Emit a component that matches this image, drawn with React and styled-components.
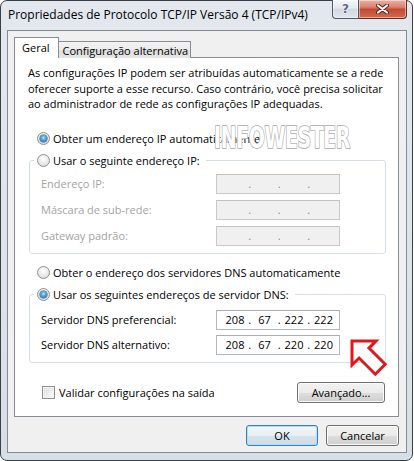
import React from "react";
import styled, { createGlobalStyle } from "styled-components";

const GlobalStyle = createGlobalStyle`
	html, body {
		margin: 0;
		padding: 0;
		background: #ffffff;
	}
	body {
		font-family: "Open Sans", "Noto Sans", sans-serif;
		font-size: 11px;
		color: #000;
	}
`;

const Window = styled.div`
	position: relative;
	box-sizing: border-box;
	width: 413px;
	height: 461px;
	display: flex;
	flex-direction: column;
	padding: 0 5px 7px 6px;
	border: 1px solid #3b3f45;
	border-radius: 7px;
	background: linear-gradient(to bottom, #e2e8ee 0%, #dde4ea 50%, #d8dee5 100%);
`;

const TitleBar = styled.div`
	height: 29px;
	display: flex;
	justify-content: space-between;
	align-items: flex-start;
`;

const Title = styled.div`
	padding: 6px 0 0 1px;
	font-size: 12px;
	line-height: 16px;
	color: #000;
`;

const Captions = styled.div`
	display: flex;
	margin-top: -1px;
`;

const CaptionButton = styled.div`
	box-sizing: border-box;
	width: ${(p) => p.$w}px;
	height: 19px;
	display: flex;
	align-items: center;
	justify-content: center;
	border: 1px solid ${(p) => (p.$close ? "#6b2a20" : "#4f5763")};
	border-top: none;
	border-left: ${(p) => (p.$close ? "none" : "1px solid #4f5763")};
	border-radius: ${(p) => (p.$close ? "0 0 4px 0" : "0 0 0 4px")};
	background: ${(p) =>
		p.$close
			? "linear-gradient(to bottom, #eab1a4 0%, #d98170 40%, #c44a32 52%, #cf6a4f 100%)"
			: "linear-gradient(to bottom, #f4f6f9 0%, #e4e9ef 45%, #d2d9e2 52%, #dfe5ec 100%)"};
	box-shadow: inset 0 0 0 1px rgba(255, 255, 255, 0.45);
`;

const HelpGlyph = styled.span`
	font-family: "DejaVu Sans", sans-serif;
	font-weight: bold;
	font-size: 12px;
	color: #5d6a7c;
	text-shadow: 0 0 2px #fff, 0 0 1px #fff;
`;

const Client = styled.div`
	flex: 1;
	display: flex;
	flex-direction: column;
	padding: 6px 7px 0 6px;
	border: 1px solid #858b93;
	background: #f0f0f0;
`;

const Tabs = styled.div`
	position: relative;
	z-index: 1;
	display: flex;
	align-items: flex-end;
	height: 21px;
	margin-bottom: -1px;
`;

const Tab = styled.div`
	box-sizing: border-box;
	height: ${(p) => (p.$active ? 21 : 17)}px;
	display: flex;
	align-items: center;
	padding: ${(p) => (p.$active ? "0 8px 2px 7px" : "0 2px 0 4px")};
	border: 1px solid #898c95;
	border-bottom: none;
	border-left: ${(p) => (p.$active ? "1px solid #898c95" : "none")};
	background: ${(p) =>
		p.$active ? "#ffffff" : "linear-gradient(to bottom, #f3f3f3 0%, #ebebeb 50%, #dedede 51%, #e6e6e6 100%)"};
`;

const Panel = styled.div`
	position: relative;
	display: flex;
	flex-direction: column;
	padding: 7px 0 13px;
	border: 1px solid #898c95;
	background: #ffffff;
`;

const Intro = styled.p`
	margin: 0;
	padding: 0 13px;
	line-height: 15.5px;
`;

const OptionRow = styled.label`
	display: flex;
	align-items: center;
	gap: 3px;
	height: 16px;
	margin-top: ${(p) => p.$top || 0}px;
	padding-left: 22px;
`;

const Radio = styled.span`
	position: relative;
	flex: none;
	box-sizing: border-box;
	width: 13px;
	height: 13px;
	border-radius: 50%;
	border: 1px solid #8e9094;
	background: radial-gradient(circle at 50% 35%, #ffffff 0%, #eeeeee 45%, #cfd1d4 100%);

	&::after {
		content: "";
		display: ${(p) => (p.$checked ? "block" : "none")};
		position: absolute;
		inset: 2px;
		border-radius: 50%;
		background: radial-gradient(circle at 50% 40%, #c5ecfc 0%, #4aa7da 40%, #1d5b8e 100%);
		box-shadow: 0 0 0 0.5px #244f77;
	}
`;

const Group = styled.fieldset`
	min-width: 0;
	margin: 6px 12px 0 14px;
	padding: ${(p) => p.$top}px 45px 7px 11px;
	border: 1px solid #d5dfe5;
	border-radius: 3px;
	display: flex;
	flex-direction: column;
	gap: ${(p) => p.$gap}px;
`;

const Legend = styled.legend`
	display: flex;
	align-items: center;
	gap: 3px;
	height: 16px;
	margin-left: -7px;
	padding: 0 6px 0 3px;
`;

const FieldRow = styled.div`
	display: flex;
	justify-content: space-between;
	align-items: center;
	height: 20px;
	color: ${(p) => (p.$disabled ? "#a3a3a3" : "#000")};
`;

const IpBox = styled.div`
	box-sizing: border-box;
	width: 124px;
	height: 20px;
	display: flex;
	align-items: center;
	padding-left: 7px;
	border: 1px solid ${(p) => (p.$disabled ? "#c9c9c9" : "#b4b7bd")};
	border-top-color: ${(p) => (p.$disabled ? "#c2c2c2" : "#abadb3")};
	background: ${(p) => (p.$disabled ? "#f0f0f0" : "#ffffff")};
	color: ${(p) => (p.$disabled ? "#8a8a8a" : "#000")};
`;

const Octet = styled.span`
	width: 22px;
	text-align: center;
`;

const Dot = styled.span`
	width: 7.5px;
	text-align: center;
`;

const PanelFooter = styled.div`
	display: flex;
	justify-content: space-between;
	align-items: center;
	margin: 19px 13px 0 27px;
`;

const CheckLabel = styled.label`
	display: flex;
	align-items: center;
	gap: 4px;
`;

const Checkbox = styled.span`
	box-sizing: border-box;
	width: 13px;
	height: 13px;
	border: 1px solid #8e8f8f;
	background: linear-gradient(135deg, #dcdcdc 0%, #f0f0f0 60%, #fafafa 100%);
	box-shadow: inset 0 0 0 1px #f4f4f4;
`;

const Button = styled.button`
	box-sizing: border-box;
	width: ${(p) => p.$w}px;
	height: 21px;
	padding: 0;
	font: inherit;
	color: #000;
	border: 1px solid ${(p) => (p.$primary ? "#3c7fb1" : "#707070")};
	border-radius: 3px;
	background: ${(p) =>
		p.$primary
			? "linear-gradient(to bottom, #f1f6fa 0%, #e7eff5 50%, #d6e4ef 51%, #cbdcea 100%)"
			: "linear-gradient(to bottom, #f2f2f2 0%, #ebebeb 50%, #dddddd 51%, #cfcfcf 100%)"};
	box-shadow: inset 0 0 0 1px ${(p) => (p.$primary ? "#b5dcf3" : "#fbfbfb")};
`;

const DialogButtons = styled.div`
	display: flex;
	justify-content: flex-end;
	gap: 8px;
	margin-top: 8px;
`;

const Watermark = styled.div`
	position: absolute;
	left: 213px;
	top: 121px;
	font-family: "DejaVu Sans Condensed", "DejaVu Sans", sans-serif;
	font-weight: bold;
	font-size: 30px;
	line-height: 32px;
	letter-spacing: -0.5px;
	color: #ffffff;
	-webkit-text-stroke: 1.6px #a9a9a9;
	paint-order: stroke fill;
	transform: scaleX(0.7);
	transform-origin: left top;
	pointer-events: none;
`;

const Arrow = styled.svg`
	position: absolute;
	left: 344px;
	top: 333px;
	pointer-events: none;
`;

const IpField = ({ value, disabled }) => {
	const parts = value || ["", "", "", ""];
	return (
		<IpBox $disabled={disabled}>
			<Octet>{parts[0]}</Octet>
			<Dot>.</Dot>
			<Octet>{parts[1]}</Octet>
			<Dot>.</Dot>
			<Octet>{parts[2]}</Octet>
			<Dot>.</Dot>
			<Octet>{parts[3]}</Octet>
		</IpBox>
	);
};

const App = () => {
	return (
		<>
			<GlobalStyle />
			<Window>
				<TitleBar>
					<Title>Propriedades de Protocolo TCP/IP Versão 4 (TCP/IPv4)</Title>
					<Captions>
						<CaptionButton $w={27}>
							<HelpGlyph>?</HelpGlyph>
						</CaptionButton>
						<CaptionButton $w={48} $close>
							<svg width="13" height="10" viewBox="0 0 13 10">
								<path d="M2 1.5 L11 8.5 M11 1.5 L2 8.5" stroke="#5b2219" strokeWidth="4" strokeLinecap="round" />
								<path d="M2 1.5 L11 8.5 M11 1.5 L2 8.5" stroke="#ffffff" strokeWidth="2.2" strokeLinecap="round" />
							</svg>
						</CaptionButton>
					</Captions>
				</TitleBar>
				<Client>
					<Tabs>
						<Tab $active>Geral</Tab>
						<Tab>Configuração alternativa</Tab>
					</Tabs>
					<Panel>
						<Intro>
							As configurações IP podem ser atribuídas automaticamente se a rede
							<br />
							oferecer suporte a esse recurso. Caso contrário, você precisa solicitar
							<br />
							ao administrador de rede as configurações IP adequadas.
						</Intro>
						<OptionRow $top={19}>
							<Radio $checked />
							Obter um endereço IP automaticamente
						</OptionRow>
						<Group $top={5} $gap={6}>
							<Legend>
								<Radio />
								Usar o seguinte endereço IP:
							</Legend>
							<FieldRow $disabled>
								Endereço IP:
								<IpField disabled />
							</FieldRow>
							<FieldRow $disabled>
								Máscara de sub-rede:
								<IpField disabled />
							</FieldRow>
							<FieldRow $disabled>
								Gateway padrão:
								<IpField disabled />
							</FieldRow>
						</Group>
						<OptionRow $top={11}>
							<Radio />
							Obter o endereço dos servidores DNS automaticamente
						</OptionRow>
						<Group $top={7} $gap={5}>
							<Legend>
								<Radio $checked />
								Usar os seguintes endereços de servidor DNS:
							</Legend>
							<FieldRow>
								Servidor DNS preferencial:
								<IpField value={["208", "67", "222", "222"]} />
							</FieldRow>
							<FieldRow>
								Servidor DNS alternativo:
								<IpField value={["208", "67", "220", "220"]} />
							</FieldRow>
						</Group>
						<PanelFooter>
							<CheckLabel>
								<Checkbox />
								Validar configurações na saída
							</CheckLabel>
							<Button $w={88}>Avançado...</Button>
						</PanelFooter>
					</Panel>
					<DialogButtons>
						<Button $w={72} $primary>
							OK
						</Button>
						<Button $w={73}>Cancelar</Button>
					</DialogButtons>
				</Client>
				<Watermark>INFOWESTER</Watermark>
				<Arrow width="48" height="48" viewBox="344 333 48 48">
					<polygon
						points="351,340 375,340 368,347.1 384.2,363.3 374.3,373.2 358.1,357 351,364"
						fill="#ffffff"
						stroke="#e3161b"
						strokeWidth="3"
						strokeLinejoin="miter"
					/>
				</Arrow>
			</Window>
		</>
	);
};

export default App;
